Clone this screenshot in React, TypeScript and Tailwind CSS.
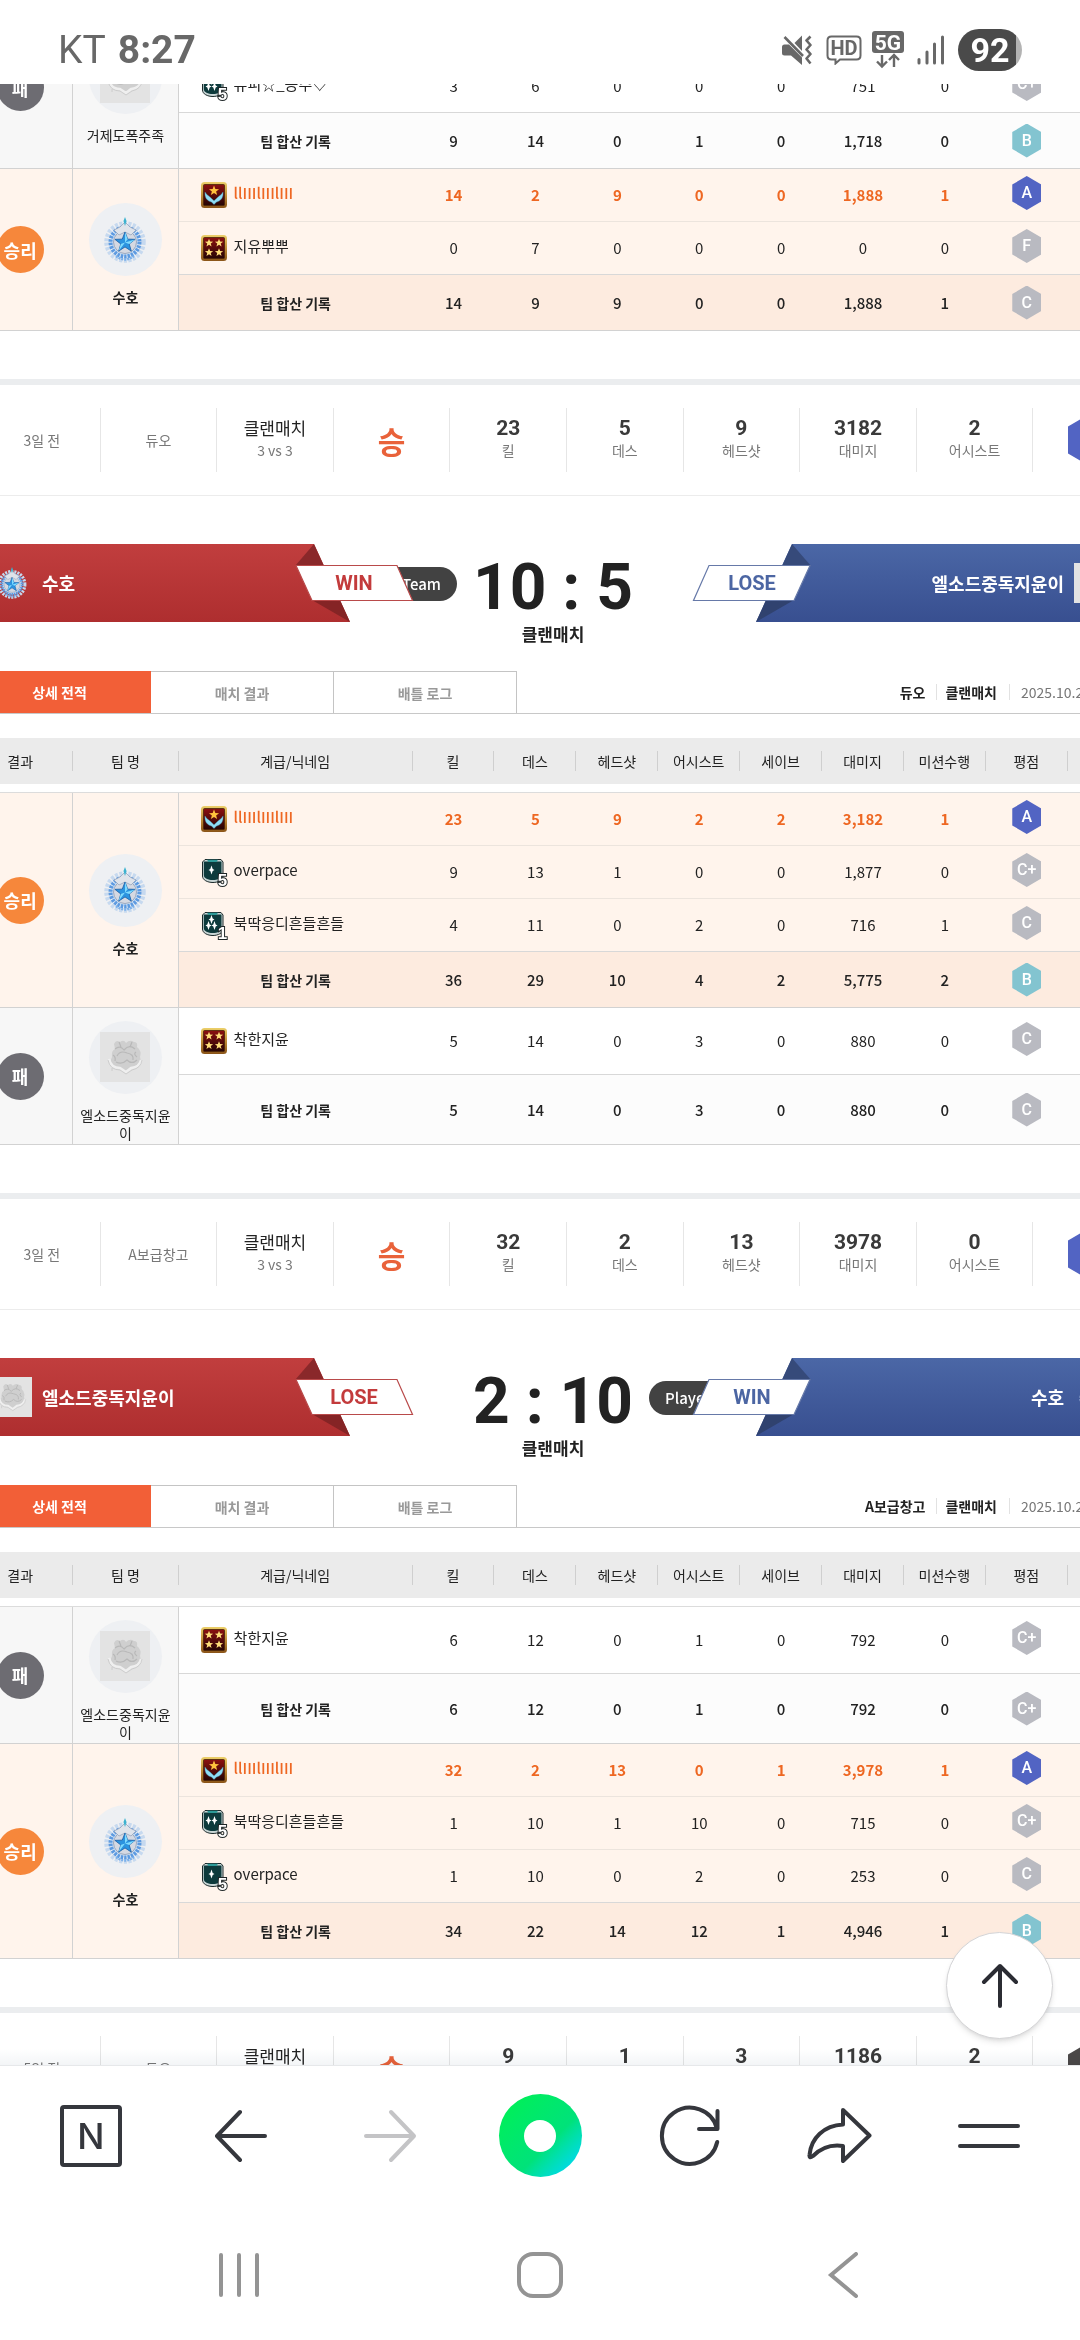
import React from "react";
import { clsx } from "clsx";

type Rank = "wings" | "stars" | "shield1" | "shield2" | "shield3";
type Player = { rank: Rank; level?: string; name: string; me?: boolean; stats: string[]; grade: string };
type Team = {
  win: boolean;
  clan: string;
  tall?: boolean;
  hiddenRow?: boolean;
  players: Player[];
  total: string[];
  totalGrade: string;
};
type Side = { clan: string; win: boolean; mine: boolean };
type Match = {
  when: string;
  map: string;
  summary: [string, string][];
  hex: string;
  left: Side;
  right: Side;
  score: string;
  teams: Team[];
};

const ME = "llIIIlIIIlIII";

const firstTeams: Team[] = [
  {
    win: false,
    clan: "거제도폭주족",
    hiddenRow: true,
    players: [{ rank: "shield3", level: "5", name: "유피☆_공주♡", stats: ["3", "6", "0", "0", "0", "751", "0"], grade: "C+" }],
    total: ["9", "14", "0", "1", "0", "1,718", "0"],
    totalGrade: "B",
  },
  {
    win: true,
    clan: "수호",
    players: [
      { rank: "wings", name: ME, me: true, stats: ["14", "2", "9", "0", "0", "1,888", "1"], grade: "A" },
      { rank: "stars", name: "지유뿌뿌", stats: ["0", "7", "0", "0", "0", "0", "0"], grade: "F" },
    ],
    total: ["14", "9", "9", "0", "0", "1,888", "1"],
    totalGrade: "C",
  },
];

const matches: Match[] = [
  {
    when: "3일 전",
    map: "듀오",
    summary: [["23", "킬"], ["5", "데스"], ["9", "헤드샷"], ["3182", "대미지"], ["2", "어시스트"]],
    hex: "text-[#5264c3]",
    left: { clan: "수호", win: true, mine: true },
    right: { clan: "엘소드중독지윤이", win: false, mine: false },
    score: "10 : 5",
    teams: [
      {
        win: true,
        clan: "수호",
        players: [
          { rank: "wings", name: ME, me: true, stats: ["23", "5", "9", "2", "2", "3,182", "1"], grade: "A" },
          { rank: "shield1", level: "5", name: "overpace", stats: ["9", "13", "1", "0", "0", "1,877", "0"], grade: "C+" },
          { rank: "shield3", level: "1", name: "북딱응디흔들흔들", stats: ["4", "11", "0", "2", "0", "716", "1"], grade: "C" },
        ],
        total: ["36", "29", "10", "4", "2", "5,775", "2"],
        totalGrade: "B",
      },
      {
        win: false,
        clan: "엘소드중독지윤이",
        tall: true,
        players: [{ rank: "stars", name: "착한지윤", stats: ["5", "14", "0", "3", "0", "880", "0"], grade: "C" }],
        total: ["5", "14", "0", "3", "0", "880", "0"],
        totalGrade: "C",
      },
    ],
  },
  {
    when: "3일 전",
    map: "A보급창고",
    summary: [["32", "킬"], ["2", "데스"], ["13", "헤드샷"], ["3978", "대미지"], ["0", "어시스트"]],
    hex: "text-[#5264c3]",
    left: { clan: "엘소드중독지윤이", win: false, mine: false },
    right: { clan: "수호", win: true, mine: true },
    score: "2 : 10",
    teams: [
      {
        win: false,
        clan: "엘소드중독지윤이",
        tall: true,
        players: [{ rank: "stars", name: "착한지윤", stats: ["6", "12", "0", "1", "0", "792", "0"], grade: "C+" }],
        total: ["6", "12", "0", "1", "0", "792", "0"],
        totalGrade: "C+",
      },
      {
        win: true,
        clan: "수호",
        players: [
          { rank: "wings", name: ME, me: true, stats: ["32", "2", "13", "0", "1", "3,978", "1"], grade: "A" },
          { rank: "shield2", level: "5", name: "북딱응디흔들흔들", stats: ["1", "10", "1", "10", "0", "715", "0"], grade: "C+" },
          { rank: "shield1", level: "5", name: "overpace", stats: ["1", "10", "0", "2", "0", "253", "0"], grade: "C" },
        ],
        total: ["34", "22", "14", "12", "1", "4,946", "1"],
        totalGrade: "B",
      },
    ],
  },
];

const columns = ["킬", "데스", "헤드샷", "어시스트", "세이브", "대미지", "미션수행", "평점"];

const STAR = "M0 -5 L1.3 -1.6 L4.8 -1.5 L2 0.7 L3 4.1 L0 2.1 L-3 4.1 L-2 0.7 L-4.8 -1.5 L-1.3 -1.6 Z";
const DIAMOND = "M0 -4.5 L1.2 -1 L3 0 L1.2 1 L0 4.5 L-1.2 1 L-3 0 L-1.2 -1 Z";

function RankIcon({ rank, level }: { rank: Rank; level?: string }) {
  if (rank === "wings" || rank === "stars") {
    return (
      <svg viewBox="0 0 26 26" className="size-[26px] shrink-0" aria-hidden="true">
        <defs>
          <linearGradient id="goldFrame" x1="0" y1="0" x2="0" y2="1">
            <stop offset="0" stopColor="#ecd06a" />
            <stop offset="0.5" stopColor="#c08d38" />
            <stop offset="1" stopColor="#8a5418" />
          </linearGradient>
          <linearGradient id="redField" x1="0" y1="0" x2="0" y2="1">
            <stop offset="0" stopColor="#8c1010" />
            <stop offset="1" stopColor="#250505" />
          </linearGradient>
        </defs>
        <rect x="0" y="0" width="26" height="26" rx="3.5" fill="url(#goldFrame)" />
        <rect x="2.5" y="2.5" width="21" height="21" rx="1" fill="url(#redField)" stroke="#4a2308" strokeWidth="0.8" />
        {rank === "stars" ? (
          <g fill="#ffdf7a">
            {[[8, 8], [18, 8], [8, 17.5], [18, 17.5]].map(([x, y]) => (
              <path key={`${x}-${y}`} d={STAR} transform={`translate(${x} ${y}) scale(0.86)`} />
            ))}
          </g>
        ) : (
          <>
            <path
              d="M4 10 C3.4 15.500 6 19 10.500 20 L13 22.500 L15.500 20 C20 19 22.600 15.500 22 10 C20.500 13 18.500 13.500 17 15 L13 18.800 L9 15 C7.500 13.500 5.500 13 4 10 Z"
              fill="#8fdcf4"
              stroke="#3a8fb0"
              strokeWidth="0.4"
            />
            <path d={STAR} transform="translate(13 8.800) scale(1.050)" fill="#ffc23d" />
          </>
        )}
      </svg>
    );
  }
  const marks =
    rank === "shield1" ? [[10.5, 12]] : rank === "shield2" ? [[7.5, 11.5], [13.5, 11.5]] : [[10.5, 8.5], [7.5, 14.5], [13.5, 14.5]];
  return (
    <svg viewBox="0 0 26 28" className="h-7 w-[26px] shrink-0 overflow-visible" aria-hidden="true">
      <path d="M1.500 4 L4 1.500 H20 L22 4 V18 C22 22 17 24.500 12 24.500 C6.500 24.500 1.500 22 1.500 18 Z" fill="#c9d6d6" stroke="#1c2b2c" strokeWidth="1" />
      <path d="M2.800 3.500 H20.500 V17 C20.500 20.500 16.500 22 11.800 22 C7 22 2.800 20.500 2.800 17 Z" fill="#0d3a3c" />
      <path d="M6 1.800 H17 L15.500 4 H7.500 Z" fill="#2d9a98" />
      <g fill="#ffffff">
        {marks.map(([x, y]) => (
          <path key={`${x}-${y}`} d={DIAMOND} transform={`translate(${x} ${y})`} />
        ))}
      </g>
      <text
        x="21.500"
        y="27.500"
        textAnchor="middle"
        fill="#ffffff"
        stroke="#1d2526"
        strokeWidth="2"
        paintOrder="stroke"
        className="font-['Liberation_Sans'] text-[17px] font-bold"
      >
        {level}
      </text>
    </svg>
  );
}

function GuardianEmblem({ className }: { className: string }) {
  return (
    <svg viewBox="0 0 46 46" className={className} aria-hidden="true">
      <circle cx="23" cy="25" r="18.500" fill="none" stroke="#c6d9ef" strokeWidth="4.500" strokeDasharray="3 1.500" />
      <circle cx="23" cy="25" r="14.500" fill="#cfe2f6" stroke="#5d9ae0" strokeWidth="4" strokeDasharray="2.500 1" />
      <circle cx="23" cy="25" r="11.500" fill="#d5d9e2" stroke="#8c9bb3" strokeWidth="0.8" />
      <path d="M12 13 L18 10 L23 5 L28 10 L34 13 L29 18 L23 15 L17 18 Z" fill="#dfe3ea" stroke="#96a5bc" strokeWidth="0.8" />
      <path d="M23 0 L24.500 4 L23 9 L21.500 4 Z" fill="#3bb2cf" />
      <path d={STAR} transform="translate(23 25.500) scale(2.100)" fill="#2b94e0" stroke="#1b5fa8" strokeWidth="0.4" />
      <path d="M23 15 L25.700 22.200 L23 25.500 Z M33 22.400 L27.200 27 L23 25.500 Z M16.700 34 L18.800 27 L23 25.500 Z" fill="#7fdcff" />
      <path d="M14 39 Q23 46 32 39" fill="none" stroke="#7ab0ea" strokeWidth="2.500" strokeDasharray="2 1" />
    </svg>
  );
}

function PlainEmblem({ className }: { className: string }) {
  return (
    <svg viewBox="0 0 50 50" className={className} aria-hidden="true">
      <rect width="50" height="50" fill="#e3e3e3" />
      <path
        d="M14 12 Q16 7 20 10 Q24 7 26 11 Q30 7 34 10 Q38 10 37 15 Q42 19 40 25 Q42 31 37 33 L26 39 L14 35 Q9 30 12 25 Q11 19 15 17 Z"
        fill="#cfcfcf"
      />
      <path
        d="M15 17 Q20 13 24 18 Q29 12 35 17 M17 24 Q20 18 27 21 Q34 22 33 28 M16 30 Q22 33 27 28 Q32 33 37 28 M19 10 L21 15 M32 10 L30 15 M13 23 Q16 25 15 29 M36 20 Q33 22 37 25"
        fill="none"
        stroke="#b8b8b8"
        strokeWidth="1.200"
      />
      <path d="M9 27 Q11 36 20 36 L26 40 L31 36 Q40 35 41 28" fill="none" stroke="#efefef" strokeWidth="2.500" />
      <path d="M8 28 Q10 38 20 38 L26 42 L32 38 Q41 36 42 28 M12 36 V39" fill="none" stroke="#c6c6c6" strokeWidth="0.8" />
    </svg>
  );
}

function ClanEmblem({ clan, small }: { clan: string; small?: boolean }) {
  if (clan === "수호") return <GuardianEmblem className={small ? "mx-1 size-8 shrink-0" : "size-[46px]"} />;
  return <PlainEmblem className={small ? "size-10 shrink-0" : "size-[50px]"} />;
}

function Grade({ grade }: { grade: string }) {
  const tone = grade === "A" ? "bg-[#5264c3]" : grade === "B" ? "bg-[#83c4d0]" : "bg-[#b9bac1]";
  return (
    <span
      className={clsx(
        "mx-auto flex h-[34px] w-[29px] items-center justify-center font-['Roboto'] text-base leading-none font-medium text-white [clip-path:polygon(50%_0,100%_25%,100%_75%,50%_100%,0_75%,0_25%)]",
        tone,
      )}
    >
      {grade}
    </span>
  );
}

function TeamRows({ team }: { team: Team }) {
  const rows = team.players.length + 1 + (team.hiddenRow ? 1 : 0);
  const side = clsx("border-r border-b border-[#d2d2d2] p-0", team.win ? "bg-[#fff4ec]" : "bg-[#f7f7f7]");
  const sideCells = (
    <>
      <td rowSpan={rows} className={side}>
        <span
          className={clsx(
            "mx-auto flex size-[47px] items-center justify-center rounded-full text-lg font-bold text-white",
            team.win ? "bg-[#f6873b]" : "bg-[#6d6c72]",
          )}
        >
          {team.win ? "승리" : "패"}
        </span>
      </td>
      <th rowSpan={rows} scope="rowgroup" className={side}>
        <div className="flex flex-col items-center gap-3 pt-[10px]">
          <span className="flex size-[73px] items-center justify-center rounded-full bg-[#eef0f3]">
            <ClanEmblem clan={team.clan} />
          </span>
          <span className={clsx("px-1 text-sm leading-[18px] break-all", team.win ? "font-bold" : "font-normal")}>{team.clan}</span>
        </div>
      </th>
    </>
  );
  const base = team.win ? "bg-[#fff4ec]" : "bg-white";
  return (
    <tbody>
      {team.hiddenRow && (
        <tr className="h-[53px]">
          {sideCells}
          <td colSpan={10} className="bg-white" />
        </tr>
      )}
      {team.players.map((p, i) => {
        const last = i === team.players.length - 1;
        const cell = clsx("border-b p-0", base, last ? "border-[#d8d8d8]" : "border-[#ece4dd]", p.me && "text-[#ee6722]");
        return (
          <tr key={p.name} className={team.tall ? "h-[67px]" : "h-[53px]"}>
            {i === 0 && !team.hiddenRow && sideCells}
            <td className={cell}>
              <div className="flex items-center gap-[7px] pl-[22px]">
                <RankIcon rank={p.rank} level={p.level} />
                <span className={clsx("pb-1", p.me && "font-medium")}>{p.name}</span>
              </div>
            </td>
            {p.stats.map((s, k) => (
              <td key={k} className={clsx(cell, "text-center", p.me && "font-bold")}>
                {s}
              </td>
            ))}
            <td className={clsx(cell, "pb-1")}>
              <Grade grade={p.grade} />
            </td>
            <td className={cell} />
          </tr>
        );
      })}
      <tr
        className={clsx(
          "font-medium [&>*]:border-b [&>*]:border-[#d2d2d2] [&>*]:p-0 [&>*]:text-center",
          team.tall ? "h-[70px]" : "h-14",
          team.win ? "bg-[#fdebdf]" : "bg-[#fcfcfc]",
        )}
      >
        <th scope="row" className="text-sm font-bold">
          팀 합산 기록
        </th>
        {team.total.map((s, k) => (
          <td key={k}>{s}</td>
        ))}
        <td>
          <Grade grade={team.totalGrade} />
        </td>
        <td />
      </tr>
    </tbody>
  );
}

function ResultTable({ teams, header = true }: { teams: Team[]; header?: boolean }) {
  return (
    <table className="w-full table-fixed border-separate border-spacing-0 text-[15px] leading-5 text-[#222]">
      <colgroup>
        <col className="w-[9%]" />
        <col className="w-[9%]" />
        <col className="w-[20%]" />
        {columns.map((c) => (
          <col key={c} className="w-[7%]" />
        ))}
        <col />
      </colgroup>
      {header && (
        <thead>
          <tr className="h-[46px] bg-[#ebebeb]">
            {["결과", "팀 명", "계급/닉네임", ...columns].map((c) => (
              <th key={c} scope="col" className="p-0 text-sm font-normal">
                <div className="flex h-5 items-center justify-center border-r border-[#cfcfcf] whitespace-nowrap">{c}</div>
              </th>
            ))}
            <td />
          </tr>
          <tr className="h-[9px]">
            <td colSpan={12} className="border-b border-[#dcdcdc] p-0" />
          </tr>
        </thead>
      )}
      {teams.map((t) => (
        <TeamRows key={t.clan} team={t} />
      ))}
    </table>
  );
}

function Summary({ when, map, summary, hex }: Pick<Match, "when" | "map" | "summary" | "hex">) {
  return (
    <div className="border-t-[6px] border-b border-t-[#ebedef] border-b-[#ececec] py-[23px]">
      <div className="-mr-3 ml-4 grid h-16 grid-cols-10 text-sm leading-5 text-[#777] *:flex *:flex-col *:items-center *:justify-center *:border-r *:border-[#e6e6e6]">
        <div>{when}</div>
        <div>{map}</div>
        <div className="pb-1">
          <span className="text-[17px] leading-6 text-[#222]">클랜매치</span>
          <span>3 vs 3</span>
        </div>
        <div className="text-3xl font-bold text-[#e9623a]">승</div>
        {summary.map(([value, label]) => (
          <div key={label} className="pb-1">
            <span className="font-['Roboto'] text-[21px] leading-6 font-bold text-[#3a3a3a]">{value}</span>
            <span>{label}</span>
          </div>
        ))}
        <div className={hex}>
          <svg viewBox="0 0 46 54" className="h-[54px] w-[46px]" aria-hidden="true">
            <path d="M23 0 L46 13.500 V40.500 L23 54 L0 40.500 V13.500 Z" fill="currentColor" />
          </svg>
        </div>
      </div>
    </div>
  );
}

function Ribbon({ side, blue }: { side: Side; blue?: boolean }) {
  return (
    <div className="relative flex h-[78px] w-[382px] shrink-0">
      <div
        className={clsx(
          "flex flex-1 items-center gap-[10px] px-6 text-lg font-bold text-white",
          blue
            ? "flex-row-reverse bg-linear-to-b from-[#4b67a6] to-[#384f90] [clip-path:polygon(36px_0,100%_0,100%_100%,0_100%)]"
            : "bg-linear-to-b from-[#c13e3e] to-[#ae2e2f] [clip-path:polygon(0_0,346px_0,100%_100%,0_100%)]",
        )}
      >
        <ClanEmblem clan={side.clan} small />
        <span>{side.clan}</span>
      </div>
      {side.mine && (
        <span
          className={clsx(
            "absolute top-[23px] flex h-[34px] items-center rounded-full bg-[#424242] px-4 text-[15px] font-medium whitespace-nowrap text-white",
            blue ? "-left-[107px]" : "-right-[107px]",
          )}
        >
          Player Team
        </span>
      )}
      <div className={clsx("absolute top-0 h-[78px] w-[128px]", blue ? "right-[322px]" : "left-[322px]")}>
        <svg viewBox="0 0 128 78" className={clsx("size-full", blue && "-scale-x-100")} aria-hidden="true">
          <path d="M24 0 L34 22 H5 Z" fill={blue ? "#364a7a" : "#8a282a"} />
          <path d="M22 56 H50 L60 78 Z" fill={blue ? "#30426f" : "#852425"} />
          <path d="M6 21.500 H107 L122.500 56.500 H22 Z" fill="#ffffff" stroke={blue ? "#6679a8" : "#b94a4a"} strokeWidth="1.200" />
        </svg>
        <span
          className={clsx(
            "absolute inset-0 flex items-center justify-center font-['Roboto'] text-xl font-bold",
            blue ? "text-[#4c66a3]" : "text-[#c33b3c]",
          )}
        >
          {side.win ? "WIN" : "LOSE"}
        </span>
      </div>
    </div>
  );
}

function MatchBlock({ match }: { match: Match }) {
  return (
    <section className="mb-12">
      <Summary when={match.when} map={match.map} summary={match.summary} hex={match.hex} />
      <div className="mt-12 flex">
        <Ribbon side={match.left} />
        <div className="flex flex-1 flex-col items-center pt-[14px] text-[#222]">
          <strong className="font-['Roboto'] text-[64px] leading-[60px] font-bold whitespace-nowrap">{match.score}</strong>
          <span className="pt-1 text-[17px] leading-6 font-bold">클랜매치</span>
        </div>
        <Ribbon side={match.right} blue />
      </div>
      <div className="mt-[25px] mb-6 flex h-[43px] items-stretch border-b border-[#c8c8c8] text-sm">
        <button className="w-[183px] bg-[#f25f37] font-bold text-white">상세 전적</button>
        <button className="w-[183px] border-t border-r border-[#c4c4c4] font-bold text-[#999]">매치 결과</button>
        <button className="w-[183px] border-t border-r border-[#c4c4c4] font-bold text-[#999]">배틀 로그</button>
        <div className="ml-auto flex items-center text-[#222]">
          <span className="border-r border-[#e2e2e2] pr-[11px] leading-4 font-bold">{match.map}</span>
          <span className="border-r border-[#e2e2e2] pr-3 pl-2 leading-4 font-bold">클랜매치</span>
          <time className="w-[128px] pl-[11px] text-[#777]">2025.10.2</time>
        </div>
      </div>
      <ResultTable teams={match.teams} />
    </section>
  );
}

function StatusBar() {
  return (
    <header className="flex h-[84px] shrink-0 items-center justify-between bg-white px-[58px] pt-4 font-['Roboto'] text-[#686868]">
      <div className="flex gap-3 text-[39px] leading-none">
        <span>KT</span>
        <span className="font-bold">8:27</span>
      </div>
      <div className="flex items-center">
        <svg viewBox="0 0 30 30" className="size-[30px]" aria-hidden="true">
          <path d="M0 12 Q0 9.500 2.500 9.500 H7 L20 22.500 V30 L9 20.500 H2.500 Q0 20.500 0 18 Z" fill="#686868" />
          <path d="M20 0.500 V16 L12.500 8 Z" fill="#686868" />
          <path d="M2.500 2 L21 21" stroke="#686868" strokeWidth="2.600" />
          <path d="M28.500 1.500 L24.500 5.500 L28.500 10 L24.500 14.500 L28.500 19 L24.500 23.500 L28.500 28.500" fill="none" stroke="#686868" strokeWidth="2.600" strokeLinejoin="round" />
        </svg>
        <svg viewBox="0 0 36 30" className="ml-[14px] h-[30px] w-9" aria-hidden="true">
          <path d="M5.500 1.500 H30.500 Q34.500 1.500 34.500 5.500 V20.500 Q34.500 24.500 30.500 24.500 H14 L9.500 28.500 V24.500 H5.500 Q1.500 24.500 1.500 20.500 V5.500 Q1.500 1.500 5.500 1.500 Z" fill="none" stroke="#686868" strokeWidth="2" />
          <text x="18" y="20" textAnchor="middle" fill="#686868" className="font-['Roboto'] text-[20px] font-bold">
            HD
          </text>
        </svg>
        <svg viewBox="0 0 32 38" className="ml-[10px] h-[38px] w-8" aria-hidden="true">
          <rect x="0" y="0" width="32" height="22" rx="3" fill="#686868" />
          <text x="16" y="18.500" textAnchor="middle" fill="#ffffff" className="font-['Roboto'] text-[21px] font-bold">
            5G
          </text>
          <path d="M10 24 V35 M5 30.500 L10 35.500 L15 30.500 M22 36 V25 M17 29 L22 24 L27 29" fill="none" stroke="#686868" strokeWidth="2.400" />
        </svg>
        <svg viewBox="0 0 28 30" className="mx-[13px] h-[30px] w-7" aria-hidden="true">
          <path d="M2 24.500 V28 M10 17 V28 M17.500 9 V28 M25.500 2 V28" stroke="#686868" strokeWidth="3" strokeLinecap="round" />
        </svg>
        <span className="flex h-[42px] w-16 items-center justify-center rounded-full bg-linear-to-r from-[#4a4a4a] from-90% to-[#b3b3b3] to-90% text-[34px] leading-none font-bold text-white">
          92
        </span>
      </div>
    </header>
  );
}

function BrowserBar() {
  const stroke = { fill: "none", stroke: "currentColor", strokeWidth: 4, strokeLinecap: "round", strokeLinejoin: "round" } as const;
  return (
    <nav className="flex h-[140px] shrink-0 border-t border-[#e6e8ea] bg-white px-4 text-[#35373d] *:flex *:flex-1 *:items-center *:justify-center">
      <button aria-label="홈">
        <span className="flex size-[62px] items-center justify-center rounded-[4px] border-4 border-current font-['Inter'] text-4xl leading-none font-medium">
          N
        </span>
      </button>
      <button aria-label="뒤로">
        <svg viewBox="0 0 54 54" className="size-[54px]">
          <path d="M51 27 H4 M26 3 L3 27 L26 51" {...stroke} />
        </svg>
      </button>
      <button aria-label="앞으로" disabled className="text-[#c4c4c6]">
        <svg viewBox="0 0 54 54" className="size-[54px]">
          <path d="M3 27 H50 M28 3 L51 27 L28 51" {...stroke} />
        </svg>
      </button>
      <button aria-label="그린닷">
        <span className="flex size-[83px] items-center justify-center rounded-full bg-linear-135 from-[#00ee5b] from-15% via-[#00e27a] via-60% to-[#00d8ee] to-90%">
          <span className="size-8 rounded-full bg-white" />
        </span>
      </button>
      <button aria-label="새로고침">
        <svg viewBox="0 0 62 62" className="size-[62px]">
          <path d="M58.200 37 A28 28 0 1 1 58 23.700 M58.500 6 V24 H40" {...stroke} />
        </svg>
      </button>
      <button aria-label="공유">
        <svg viewBox="0 0 66 62" className="h-[62px] w-[66px]">
          <path d="M37 5 L63.500 30.500 L37 56 V41 C24 39 14 44 7 51 Q3 54 3.500 50 C5 33 18 20.500 37 19.500 Z" {...stroke} />
        </svg>
      </button>
      <button aria-label="메뉴">
        <svg viewBox="0 0 62 62" className="size-[62px]">
          <path d="M2 21 H60 M2 41 H60" {...stroke} />
        </svg>
      </button>
    </nav>
  );
}

function SystemBar() {
  const stroke = { fill: "none", stroke: "#949494", strokeWidth: 4, strokeLinecap: "round" } as const;
  return (
    <nav className="flex h-[135px] shrink-0 bg-white px-[88px] pt-1 *:flex *:flex-1 *:items-center *:justify-center">
      <button aria-label="최근 앱">
        <svg viewBox="0 0 46 46" className="size-[46px]">
          <path d="M5 3 V43 M23 3 V43 M41 3 V43" {...stroke} />
        </svg>
      </button>
      <button aria-label="홈 화면">
        <svg viewBox="0 0 46 46" className="size-[46px]">
          <rect x="2" y="2" width="42" height="42" rx="14" {...stroke} />
        </svg>
      </button>
      <button aria-label="뒤로 가기">
        <svg viewBox="0 0 46 46" className="size-[46px]">
          <path d="M38 2 L13 23 L38 44" {...stroke} />
        </svg>
      </button>
    </nav>
  );
}

export default function App() {
  return (
    <div className="flex h-screen flex-col overflow-hidden bg-white font-['Noto_Sans_CJK_KR',sans-serif]">
      <StatusBar />
      <div className="relative min-h-0 flex-1 overflow-hidden">
        <main className="-mt-[77px] -ml-8 w-[calc(100%+90px)]">
          <section className="mb-12">
            <ResultTable teams={firstTeams} header={false} />
          </section>
          {matches.map((m) => (
            <MatchBlock key={m.map} match={m} />
          ))}
          <Summary
            when="5일 전"
            map="듀오"
            summary={[["9", "킬"], ["1", "데스"], ["3", "헤드샷"], ["1186", "대미지"], ["2", "어시스트"]]}
            hex="text-[#4b4848]"
          />
        </main>
        <div className="pointer-events-none absolute inset-x-0 bottom-0 h-4 bg-linear-to-b from-white to-[#f3f5f7] mix-blend-multiply" />
        <button
          aria-label="맨 위로"
          className="absolute right-[27px] bottom-[26px] flex size-[107px] items-center justify-center rounded-full border border-[#d4d4d6] bg-white shadow-md"
        >
          <svg viewBox="0 0 40 48" className="h-12 w-10" fill="none" stroke="#2b2c33" strokeWidth="4" strokeLinecap="round" strokeLinejoin="round">
            <path d="M20 44 V4 M4 20 L20 4 L36 20" />
          </svg>
        </button>
      </div>
      <BrowserBar />
      <SystemBar />
    </div>
  );
}
